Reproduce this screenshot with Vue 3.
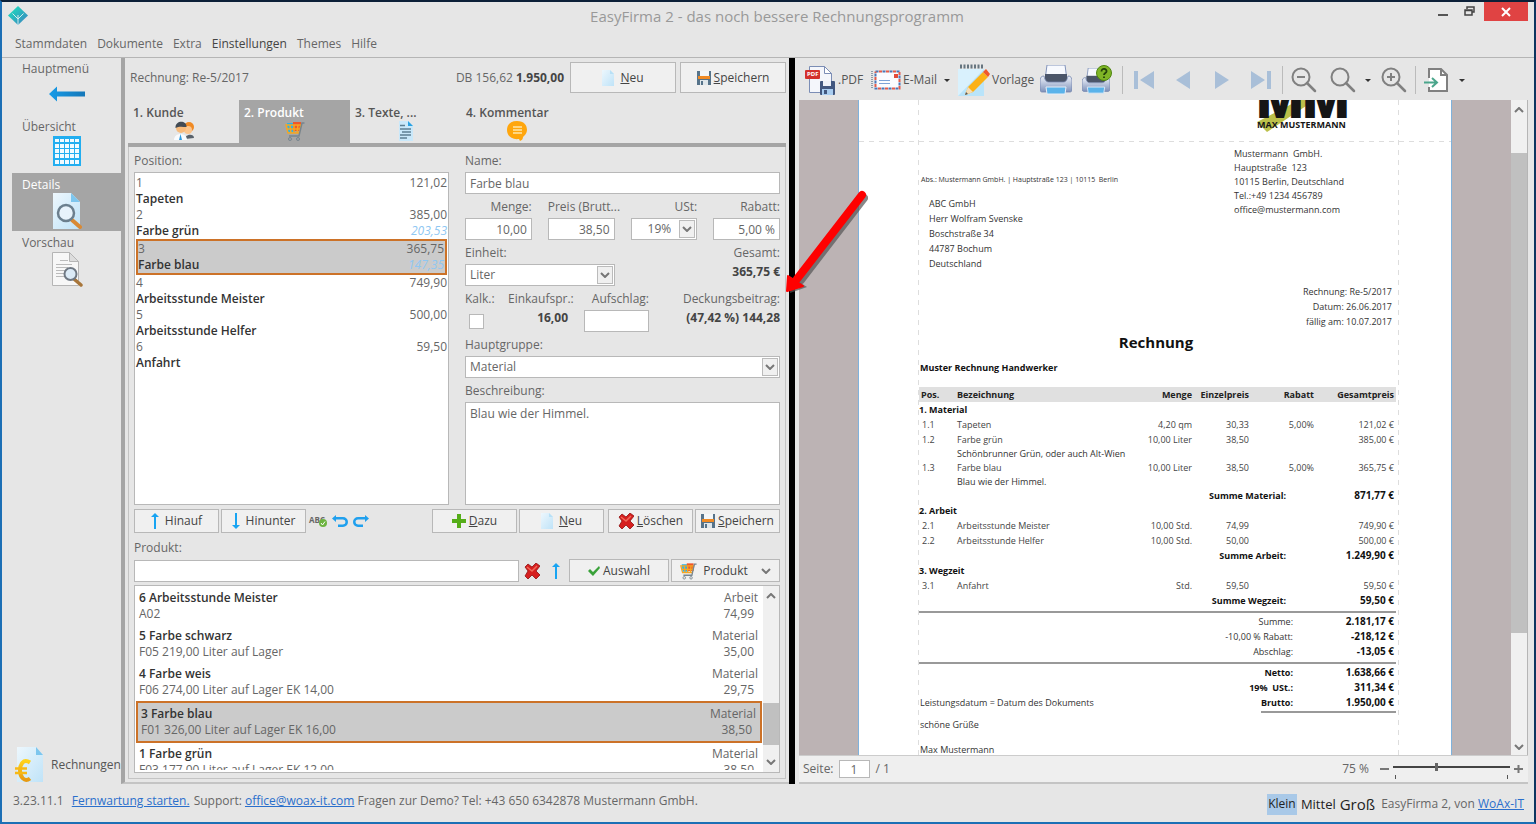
<script setup>
import { ref } from 'vue'

const menu = ['Stammdaten', 'Dokumente', 'Extra', 'Einstellungen', 'Themes', 'Hilfe']
const side = [
  { label: 'Hauptmenü', icon: 'i-back', w: 36, h: 34 },
  { label: 'Übersicht', icon: 'i-grid', w: 30, h: 32 },
  { label: 'Details', icon: 'i-detail', w: 30, h: 36, active: true },
  { label: 'Vorschau', icon: 'i-preview', w: 32, h: 36 },
]
const tabs = [
  { label: '1. Kunde', icon: 'i-people' },
  { label: '2. Produkt', icon: 'i-cart', active: true },
  { label: '3. Texte, ...', icon: 'i-text' },
  { label: '4. Kommentar', icon: 'i-comment' },
]
const positions = [
  { n: 1, name: 'Tapeten', sum: '121,02' },
  { n: 2, name: 'Farbe grün', sum: '385,00', db: '203,53' },
  { n: 3, name: 'Farbe blau', sum: '365,75', db: '147,35', active: true },
  { n: 4, name: 'Arbeitsstunde Meister', sum: '749,90' },
  { n: 5, name: 'Arbeitsstunde Helfer', sum: '500,00' },
  { n: 6, name: 'Anfahrt', sum: '59,50' },
]
const products = [
  { name: '6 Arbeitsstunde Meister', info: 'A02', group: 'Arbeit', price: '74,99' },
  { name: '5 Farbe schwarz', info: 'F05 219,00 Liter auf Lager', group: 'Material', price: '35,00' },
  { name: '4 Farbe weis', info: 'F06 274,00 Liter auf Lager EK 14,00', group: 'Material', price: '29,75' },
  { name: '3 Farbe blau', info: 'F01 326,00 Liter auf Lager EK 16,00', group: 'Material', price: '38,50', active: true },
  { name: '1 Farbe grün', info: 'F03 177,00 Liter auf Lager EK 12,00', group: 'Material', price: '38,50' },
]
const invoice = [
  { kind: 'group', text: '1. Material' },
  { kind: 'item', pos: '1.1', text: 'Tapeten', qty: '4,20 qm', price: '30,33', rebate: '5,00%', sum: '121,02 €' },
  { kind: 'item', pos: '1.2', text: 'Farbe grün', qty: '10,00 Liter', price: '38,50', rebate: '', sum: '385,00 €' },
  { kind: 'note', text: 'Schönbrunner Grün, oder auch Alt-Wien' },
  { kind: 'item', pos: '1.3', text: 'Farbe blau', qty: '10,00 Liter', price: '38,50', rebate: '5,00%', sum: '365,75 €' },
  { kind: 'note', text: 'Blau wie der Himmel.' },
  { kind: 'sum', text: 'Summe Material:', sum: '871,77 €' },
  { kind: 'group', text: '2. Arbeit' },
  { kind: 'item', pos: '2.1', text: 'Arbeitsstunde Meister', qty: '10,00 Std.', price: '74,99', rebate: '', sum: '749,90 €' },
  { kind: 'item', pos: '2.2', text: 'Arbeitsstunde Helfer', qty: '10,00 Std.', price: '50,00', rebate: '', sum: '500,00 €' },
  { kind: 'sum', text: 'Summe Arbeit:', sum: '1.249,90 €' },
  { kind: 'group', text: '3. Wegzeit' },
  { kind: 'item', pos: '3.1', text: 'Anfahrt', qty: 'Std.', price: '59,50', rebate: '', sum: '59,50 €' },
  { kind: 'sum', text: 'Summe Wegzeit:', sum: '59,50 €' },
]
const name = ref('Farbe blau')
const description = ref('Blau wie der Himmel.')
const zoom = ref(37)
</script>

<template>
  <div class="window">
    <svg class="defs" width="0" height="0" aria-hidden="true">
      <defs>
        <linearGradient id="g-blue" x1="0" y1="0" x2="1" y2="0"><stop offset="0" stop-color="#189ce8" /><stop offset="1" stop-color="#1577b8" /></linearGradient>
        <linearGradient id="g-sheet" x1="0" y1="0" x2="1" y2="1"><stop offset="0" stop-color="#edf7fd" /><stop offset="1" stop-color="#bfe3f8" /></linearGradient>
        <linearGradient id="g-print" x1="0" y1="0" x2="0" y2="1"><stop offset="0" stop-color="#eef2fa" /><stop offset="1" stop-color="#7f92ba" /></linearGradient>
        <linearGradient id="g-logo" x1="0" y1="0" x2="1" y2="1"><stop offset="0" stop-color="#19e6bd" /><stop offset="1" stop-color="#3f7fc0" /></linearGradient>
        <linearGradient id="g-gold" x1="0" y1="0" x2="0" y2="1"><stop offset="0" stop-color="#ffd21c" /><stop offset="1" stop-color="#e89a12" /></linearGradient>
      </defs>
      <symbol id="i-logo" viewBox="0 0 20 20">
        <path d="M10 0 20 9.500 10 19 0 9.500z" fill="url(#g-logo)" />
        <path d="M10 9v10M10 13 4.500 7.500M10 13l5.500-5.500" stroke="#d5ecec" stroke-width="1" fill="none" />
      </symbol>
      <symbol id="i-back" viewBox="0 0 36 34"><path d="M0 17 8 9.500v5h28v5H8v5z" fill="url(#g-blue)" /></symbol>
      <symbol id="i-grid" viewBox="0 0 30 32">
        <path d="M1 1h28v30H1z" fill="#22aef0" />
        <path d="M3 4h4v3H3zM8 4h4v3H8zM13 4h4v3h-4zM18 4h4v3h-4zM23 4h4v3h-4zM3 9h4v4H3zM8 9h4v4H8zM13 9h4v4h-4zM18 9h4v4h-4zM23 9h4v4h-4zM3 14h4v4H3zM8 14h4v4H8zM13 14h4v4h-4zM18 14h4v4h-4zM23 14h4v4h-4zM3 19h4v4H3zM8 19h4v4H8zM13 19h4v4h-4zM18 19h4v4h-4zM23 19h4v4h-4zM3 25h4v4H3zM8 25h4v4H8zM13 25h4v4h-4zM18 25h4v4h-4zM23 25h4v4h-4z" fill="#f0faff" />
      </symbol>
      <symbol id="i-detail" viewBox="0 0 30 36">
        <path d="M1 0h18l9 9v27H1z" fill="url(#g-sheet)" /><path d="M19 0v9h9z" fill="#7dc6ee" />
        <path d="m20 27 8 7" stroke="#d98a35" stroke-width="4" stroke-linecap="round" />
        <circle cx="14" cy="20" r="8" fill="#e8f3fb" stroke="#6b7f8e" stroke-width="2.500" />
      </symbol>
      <symbol id="i-preview" viewBox="0 0 32 36">
        <path d="M1.500 1.500h17l9 9v24h-26z" fill="#f7f7f7" stroke="#b5b5b5" /><path d="M18.500 1.500v9h9z" fill="#ddd" stroke="#b5b5b5" />
        <path d="M9 9.500h8M5 13.500h16M5 16.500h12M5 19.500h9M5 22.500h9M5 25.500h10" stroke="#bbb" />
        <path d="m23 28 7 6" stroke="#a8763a" stroke-width="3.500" stroke-linecap="round" />
        <circle cx="19.500" cy="23" r="6" fill="#dcebf7" stroke="#707984" stroke-width="2" />
      </symbol>
      <symbol id="i-euro" viewBox="0 0 30 36">
        <path d="M2 0h19l7 8v27H2z" fill="url(#g-sheet)" /><path d="M21 0v8h7z" fill="#7dc6ee" />
        <path d="M15 15.500C8 11 5 18 5 23.500S9 36 15 31.500" fill="none" stroke="url(#g-gold)" stroke-width="4" />
        <path d="M0 21.500h12M0 26h12" fill="none" stroke="#f7b916" stroke-width="2.500" />
      </symbol>
      <symbol id="i-people" viewBox="0 0 20 20">
        <circle cx="15" cy="6" r="5" fill="#f08a24" /><circle cx="14" cy="9" r="4" fill="#fbc58d" />
        <path d="M11 18c0-5 9-6 9-1z" fill="#59626b" /><circle cx="7" cy="7" r="5" fill="#f8bb7c" />
        <path d="M1.500 7C1-1 13-1 12.500 6 9 6 5 5 1.500 7z" fill="#424b54" />
        <path d="M0 19c0-8 13-8 13 0z" fill="#f8fbfe" /><path d="m6.500 13 1.500 6H5z" fill="#2c9be0" />
      </symbol>
      <symbol id="i-cart" viewBox="0 0 20 20">
        <path d="M2 2h8v9H3z" fill="#2bb2ea" /><path d="M8 1h8v9H8z" fill="#f0572b" />
        <path d="M1 4h15l-2 8H3zM5 4l1 8M9 4v8M13 4l-1 8M2 8h13" fill="none" stroke="#f5a623" stroke-width="1.500" />
        <path d="M19.500 2H17l-3 13H4" fill="none" stroke="#77858f" stroke-width="1.500" />
        <circle cx="5" cy="18" r="1.500" fill="none" stroke="#77858f" /><circle cx="13" cy="18" r="1.500" fill="none" stroke="#77858f" />
      </symbol>
      <symbol id="i-text" viewBox="0 0 20 20">
        <path d="M3 0h9l5 5v15H3z" fill="#c9e8fa" /><path d="M12 0v5h5z" fill="#2ba2e2" />
        <path d="M4 4.500h5M4 8h11M6 11h9M4 14h11M4 17h7" stroke="#5d7f94" stroke-width="1.300" />
      </symbol>
      <symbol id="i-comment" viewBox="0 0 20 20">
        <path d="M10 0c7 0 10 4 10 9 0 3-2 5-4 7 0 2-1 3-3 4l-1-2C5 19 0 15 0 9c0-5 3-9 10-9z" fill="#ffa60d" />
        <path d="M6 6h9M6 9h9M6 12h9" stroke="#ffe6a8" stroke-width="1.500" />
      </symbol>
      <symbol id="i-sheet" viewBox="0 0 12 16"><path d="M0 0h8l4 4v12H0z" fill="url(#g-sheet)" /><path d="M8 0v4h4z" fill="#b8e0f6" /></symbol>
      <symbol id="i-save" viewBox="0 0 14 14">
        <path d="M0 0h14v14H0z" fill="#56738a" /><path d="M3 0h9v6H3z" fill="#f3f6f8" /><path d="M1 5h12v3H1z" fill="#f08a24" />
        <path d="M3 9h8v5H3z" fill="#dfe6ea" /><path d="M4 10h2v4H4z" fill="#56738a" />
      </symbol>
      <symbol id="i-up" viewBox="0 0 8 16"><path d="m4 0 4 4H5v12H3V4H0z" fill="#18a4f2" /></symbol>
      <symbol id="i-down" viewBox="0 0 8 16"><path d="m4 16 4-4H5V0H3v12H0z" fill="#18a4f2" /></symbol>
      <symbol id="i-undo" viewBox="0 0 17 12"><path d="M4 0v2h7a5 5 0 0 1 0 10H6V9.500h5a2.500 2.500 0 0 0 0-5H4V7L0 3.500z" fill="#20a0ee" /></symbol>
      <symbol id="i-redo" viewBox="0 0 17 12"><path d="M13 0v2H6a5 5 0 0 0 0 10h5V9.500H6a2.500 2.500 0 0 1 0-5h7V7l4-3.500z" fill="#20a0ee" /></symbol>
      <symbol id="i-plus" viewBox="0 0 14 14"><path d="M5 0h4v5h5v4H9v5H5V9H0V5h5z" fill="#55ad19" /></symbol>
      <symbol id="i-x" viewBox="0 0 16 16">
        <path d="m1 4 3-3 4 3 4-4 4 3-4 5 4 4-4 4-4-4-4 4-3-3 3-5z" fill="#d61f1f" stroke="#8f1212" stroke-width=".8" /><path d="m3 4 5 4 5-5" stroke="#f06a5a" stroke-width="1.500" fill="none" />
      </symbol>
      <symbol id="i-check" viewBox="0 0 12 10"><path d="m0 5 2-2 3 3 6-6 1 2-7 8z" fill="#3aa23a" /></symbol>
      <symbol id="i-chev" viewBox="0 0 10 6"><path d="m1 1 4 4 4-4" fill="none" stroke="#777" stroke-width="2" /></symbol>
      <symbol id="i-chevup" viewBox="0 0 10 6"><path d="m1 5 4-4 4 4" fill="none" stroke="#777" stroke-width="2" /></symbol>
      <symbol id="i-pdf" viewBox="0 0 30 30">
        <path d="M4.500 1.500h15l7 7v19h-22z" fill="#f4f6fb" stroke="#7b8db5" /><path d="M19.500 1.500v7h7z" fill="#fff" stroke="#7b8db5" />
        <rect x="0" y="5" width="15" height="9" rx="1" fill="#d3302c" />
        <rect x="15" y="16" width="15" height="14" rx="1" fill="#42577f" /><path d="M18 16h8v5h-8z" fill="#eef1f8" /><path d="M17 24h11v6H17z" fill="#a9cdf0" /><path d="M19 25h3v4h-3z" fill="#42577f" />
      </symbol>
      <symbol id="i-mail" viewBox="0 0 30 20">
        <path d="M1 1v18" stroke="#8d9cab" stroke-width="2" stroke-dasharray="1 1" />
        <rect x="4.500" y="1.500" width="24" height="17" fill="#fbfcff" />
        <rect x="4.500" y="1.500" width="24" height="17" fill="none" stroke="#4a76b8" stroke-width="2" stroke-dasharray="3 4" /><rect x="4.500" y="1.500" width="24" height="17" fill="none" stroke="#e35b4b" stroke-width="2" stroke-dasharray="3 4" stroke-dashoffset="3.500" />
        <path d="M23 4h4v4h-4z" fill="#e34b3b" /><path d="M8 10.500h11M8 13.500h11" stroke="#7da3d6" />
      </symbol>
      <symbol id="i-note" viewBox="0 0 32 32">
        <path d="M0 5h26v27H0z" fill="#b9e4fa" /><path d="M0 5h26L0 32z" fill="#d9f1fd" /><path d="M2 2.500h23" stroke="#66757f" stroke-width="4" stroke-dasharray="2 1.500" />
        <path d="m7 31 3-8L25 8l5 5-15 15z" fill="#fbb116" /><path d="m25 8 3-3 4 5-2 3z" fill="#f0572b" /><path d="m7 31 3-8 5 5z" fill="#f5ddb8" /><path d="m7 31 1-3 2 2z" fill="#555" />
      </symbol>
      <symbol id="i-print" viewBox="0 0 32 30">
        <path d="M7 0h18l2 15H5z" fill="#f7f9fe" stroke="#8293ba" /><path d="M5 9h22v8H5z" fill="#4b5569" />
        <path d="M4 11c1 5 3 6 5 6h14c3 0 4-2 5-6 3 0 4 2 4 5v9c0 1-1 2-2 2H2c-1 0-2-1-2-2v-9c0-3 1-5 4-5z" fill="url(#g-print)" stroke="#7384ac" stroke-width=".8" />
        <path d="M6 22h20l-1 7H7z" fill="#5ab3ea" stroke="#e8eef7" />
      </symbol>
      <symbol id="i-first" viewBox="0 0 20 20"><path d="M0 1h4v18H0zM20 1v18L6 10z" fill="#a9bfd8" /></symbol>
      <symbol id="i-prev" viewBox="0 0 20 20"><path d="M17 1v18L3 10z" fill="#a9bfd8" /></symbol>
      <symbol id="i-next" viewBox="0 0 20 20"><path d="M3 1v18l14-9z" fill="#a9bfd8" /></symbol>
      <symbol id="i-last" viewBox="0 0 20 20"><path d="M16 1h4v18h-4zM0 1v18l14-9z" fill="#a9bfd8" /></symbol>
      <symbol id="i-lens" viewBox="0 0 26 26"><circle cx="10" cy="10" r="8.500" fill="none" stroke="#808080" stroke-width="2" /><path d="m16 16 8 8" stroke="#808080" stroke-width="2.500" stroke-linecap="round" /></symbol>
      <symbol id="i-export" viewBox="0 0 25 26">
        <path d="M5 11V2h12l6 6v16H5v-4" fill="#fff" stroke="#808080" stroke-width="2" /><path d="M17 2v6h6" fill="none" stroke="#808080" stroke-width="2" />
        <path d="M0 15.500h12M8 11l5 4.500L8 20" fill="none" stroke="#4ba68c" stroke-width="2" />
      </symbol>
    </svg>

    <header class="titlebar">
      <svg class="logo"><use href="#i-logo" /></svg>
      <h1>EasyFirma 2 - das noch bessere Rechnungsprogramm</h1>
      <div class="winctl">
        <button aria-label="Minimieren"><svg width="10" height="12"><path d="M0 10h10" stroke="#555" stroke-width="2" /></svg></button>
        <button aria-label="Wiederherstellen"><svg width="12" height="12"><path d="M3 4V2h7v5H8M1 5h7v5H1zM3 2h7M1 5.500h7" fill="none" stroke="#444" stroke-width="1.500" /></svg></button>
        <button class="close" aria-label="Schließen"><svg width="10" height="10"><path d="m1 1 8 8M9 1 1 9" stroke="#fff" stroke-width="2" /></svg></button>
      </div>
    </header>

    <nav class="menubar">
      <button v-for="m in menu" :key="m" :class="{ dark: m === 'Einstellungen' }">{{ m }}</button>
    </nav>

    <main class="main">
      <aside class="sidebar">
        <button v-for="s in side" :key="s.label" class="side" :class="{ active: s.active }">
          <span>{{ s.label }}</span>
          <svg :width="s.w" :height="s.h"><use :href="'#' + s.icon" /></svg>
        </button>
        <button class="module"><svg width="30" height="36"><use href="#i-euro" /></svg>Rechnungen</button>
      </aside>

      <section class="editor">
        <div class="head">
          <span>Rechnung: Re-5/2017</span>
          <span class="totals">DB 156,62 <b>1.950,00</b></span>
          <button class="btn big"><svg width="12" height="16"><use href="#i-sheet" /></svg><span><u>N</u>eu</span></button>
          <button class="btn big save"><svg width="14" height="14"><use href="#i-save" /></svg><span><u>S</u>peichern</span></button>
        </div>
        <div class="tabs">
          <button v-for="t in tabs" :key="t.label" class="tab" :class="{ active: t.active }">
            <span>{{ t.label }}</span>
            <svg width="20" height="20"><use :href="'#' + t.icon" /></svg>
          </button>
        </div>

        <div class="panel">
          <div class="upper">
            <div class="col">
              <div class="label">Position:</div>
              <ul class="list positions">
                <li v-for="p in positions" :key="p.n" :class="{ active: p.active }">
                  <div><span>{{ p.n }}</span><span>{{ p.sum }}</span></div>
                  <div><b>{{ p.name }}</b><i v-if="p.db">{{ p.db }}</i></div>
                </li>
              </ul>
            </div>
            <form class="col" @submit.prevent>
              <label class="label" for="f-name">Name:</label>
              <input id="f-name" v-model="name" class="field">
              <div class="four">
                <div><label class="label r" for="f-qty">Menge:</label><input id="f-qty" class="field r" value="10,00"></div>
                <div><label class="label" for="f-price">Preis (Brutt...</label><input id="f-price" class="field r" value="38,50"></div>
                <div><label class="label r" for="f-tax">USt:</label><div class="select"><select id="f-tax" class="field r"><option>19%</option></select><svg width="10" height="6"><use href="#i-chev" /></svg></div></div>
                <div><label class="label r" for="f-reb">Rabatt:</label><input id="f-reb" class="field r" value="5,00 %"></div>
              </div>
              <div class="two">
                <div><label class="label" for="f-unit">Einheit:</label><div class="select"><select id="f-unit" class="field"><option>Liter</option></select><svg width="10" height="6"><use href="#i-chev" /></svg></div></div>
                <div><div class="label r">Gesamt:</div><b class="value">365,75 €</b></div>
              </div>
              <div class="calc">
                <div><label class="label" for="f-calc">Kalk.:</label><input id="f-calc" type="checkbox" class="check"></div>
                <div><div class="label r">Einkaufspr.:</div><b class="value">16,00</b></div>
                <div><label class="label r" for="f-up">Aufschlag:</label><input id="f-up" class="field r"></div>
                <div><div class="label r">Deckungsbeitrag:</div><b class="value">(47,42 %) 144,28</b></div>
              </div>
              <label class="label" for="f-group">Hauptgruppe:</label>
              <div class="select"><select id="f-group" class="field"><option>Material</option></select><svg width="10" height="6"><use href="#i-chev" /></svg></div>
              <label class="label" for="f-desc">Beschreibung:</label>
              <textarea id="f-desc" v-model="description" class="field area"></textarea>
            </form>
          </div>

          <div class="actions">
            <button class="btn"><svg width="8" height="16"><use href="#i-up" /></svg>Hinauf</button>
            <button class="btn"><svg width="8" height="16"><use href="#i-down" /></svg>Hinunter</button>
            <button class="spell" aria-label="Rechtschreibung">ABC<svg width="8" height="8"><circle cx="4" cy="4" r="4" fill="#6db33f" /><path d="m2 4 1.500 2L6 2.500" stroke="#fff" fill="none" /></svg></button>
            <button class="bare" aria-label="Rückgängig"><svg width="17" height="12"><use href="#i-undo" /></svg></button>
            <button class="bare" aria-label="Wiederholen"><svg width="17" height="12"><use href="#i-redo" /></svg></button>
            <span class="push"></span>
            <button class="btn tight"><svg width="14" height="14"><use href="#i-plus" /></svg><span><u>D</u>azu</span></button>
            <button class="btn"><svg width="12" height="16"><use href="#i-sheet" /></svg><span><u>N</u>eu</span></button>
            <span></span>
            <button class="btn tight"><svg width="16" height="16"><use href="#i-x" /></svg><span><u>L</u>öschen</span></button>
            <button class="btn tight"><svg width="14" height="14"><use href="#i-save" /></svg><span><u>S</u>peichern</span></button>
          </div>

          <label class="label" for="f-search">Produkt:</label>
          <div class="search">
            <input id="f-search" class="field">
            <button class="bare" aria-label="Suche löschen"><svg width="16" height="16"><use href="#i-x" /></svg></button>
            <button class="bare" aria-label="Übernehmen"><svg width="8" height="16"><use href="#i-up" /></svg></button>
            <button class="btn tight pick"><svg width="12" height="10"><use href="#i-check" /></svg>Auswahl</button>
            <button class="btn prod"><svg width="17" height="18"><use href="#i-cart" /></svg>Produkt<svg width="10" height="6"><use href="#i-chev" /></svg></button>
          </div>

          <div class="products">
            <ul>
              <li v-for="p in products" :key="p.name" :class="{ active: p.active }">
                <div><b>{{ p.name }}</b><span>{{ p.group }}</span></div>
                <div><span>{{ p.info }}</span><span class="price">{{ p.price }}</span></div>
              </li>
            </ul>
            <div class="scroll">
              <svg width="10" height="6"><use href="#i-chevup" /></svg>
              <span class="thumb low"></span>
              <svg width="10" height="6"><use href="#i-chev" /></svg>
            </div>
          </div>
        </div>
      </section>

      <div class="splitter"></div>

      <section class="viewer">
        <div class="toolbar">
          <button class="t-pdf"><span class="pdfic"><svg width="30" height="30"><use href="#i-pdf" /></svg><em>PDF</em></span>.PDF</button>
          <button class="t-mail"><svg width="30" height="20"><use href="#i-mail" /></svg>E-Mail<i class="caret"></i></button>
          <button class="t-note"><svg width="32" height="32"><use href="#i-note" /></svg>Vorlage</button>
          <button class="t-icon" aria-label="Drucken"><svg width="32" height="30"><use href="#i-print" /></svg></button>
          <button class="t-icon last" aria-label="Druckoptionen">
            <svg width="30" height="30" viewBox="0 0 30 30"><use href="#i-print" x="0" y="3" width="28" height="26" /><circle cx="22" cy="8" r="7.500" fill="#7fb526" stroke="#4e8410" /><path d="M19.500 6.500c0-4 5.500-3 5 0-.3 1.500-2.500 1.500-2.500 3.500M22 11.500v1.500" stroke="#24420a" stroke-width="1.800" fill="none" /></svg>
          </button>
          <span class="sep"></span>
          <button v-for="n in ['first', 'prev', 'next', 'last']" :key="n" class="t-nav" :aria-label="n"><svg width="20" height="20"><use :href="'#i-' + n" /></svg></button>
          <span class="sep"></span>
          <button class="t-nav" aria-label="Verkleinern"><svg width="26" height="26"><use href="#i-lens" /><path d="M6 10h8" stroke="#808080" stroke-width="2" /></svg></button>
          <button class="t-nav" aria-label="Zoom"><svg width="26" height="26"><use href="#i-lens" /></svg></button>
          <button class="t-drop" aria-label="Zoomstufen"><i class="caret"></i></button>
          <button class="t-nav" aria-label="Vergrößern"><svg width="26" height="26"><use href="#i-lens" /><path d="M6 10h8M10 6v8" stroke="#808080" stroke-width="2" /></svg></button>
          <span class="sep"></span>
          <button class="t-nav" aria-label="Export"><svg width="25" height="26"><use href="#i-export" /></svg></button>
          <button class="t-drop" aria-label="Exportformate"><i class="caret"></i></button>
        </div>

        <div class="canvas">
          <div class="stage">
            <article class="page">
              <div class="guide"></div>
              <div class="brand">
                <svg width="70" height="40" aria-hidden="true"><path d="m4 26 50-26h14L14 36z" fill="#bcc04a" /></svg>
                <div class="mono"><strong>MM</strong></div>
                <small>MAX MUSTERMANN</small>
              </div>
              <div class="sheet">
                <address class="company">Mustermann&nbsp; GmbH.<br>Hauptstraße&nbsp; 123<br>10115 Berlin, Deutschland<br>Tel.:+49 1234 456789<br>office@mustermann.com</address>
                <p class="sender">Abs.: Mustermann GmbH. | Hauptstraße 123 | 10115&nbsp; Berlin</p>
                <address class="customer">ABC GmbH<br>Herr Wolfram Svenske<br>Boschstraße 34<br>44787 Bochum<br>Deutschland</address>
                <p class="meta">Rechnung: Re-5/2017<br>Datum: 26.06.2017<br>fällig am: 10.07.2017</p>
                <h2>Rechnung</h2>
                <h3>Muster Rechnung Handwerker</h3>
                <table class="items">
                  <colgroup><col class="c1"><col><col class="c3"><col class="c4"><col class="c5"><col class="c6"></colgroup>
                  <thead><tr><th>Pos.</th><th>Bezeichnung</th><th>Menge</th><th>Einzelpreis</th><th>Rabatt</th><th>Gesamtpreis</th></tr></thead>
                  <tbody>
                    <tr v-for="(r, i) in invoice" :key="i" :class="r.kind">
                      <td v-if="r.kind === 'group'" colspan="6">{{ r.text }}</td>
                      <template v-else-if="r.kind === 'note'"><td></td><td colspan="5">{{ r.text }}</td></template>
                      <template v-else-if="r.kind === 'sum'"><td colspan="5">{{ r.text }}</td><td>{{ r.sum }}</td></template>
                      <template v-else><td>{{ r.pos }}</td><td>{{ r.text }}</td><td>{{ r.qty }}</td><td>{{ r.price }}</td><td>{{ r.rebate }}</td><td>{{ r.sum }}</td></template>
                    </tr>
                  </tbody>
                </table>
                <table class="sums">
                  <tbody>
                    <tr><td></td><td>Summe:</td><td><b>2.181,17 €</b></td></tr>
                    <tr><td></td><td>-10,00 % Rabatt:</td><td><b>-218,12 €</b></td></tr>
                    <tr><td></td><td>Abschlag:</td><td><b>-13,05 €</b></td></tr>
                  </tbody>
                </table>
                <table class="sums">
                  <tbody>
                    <tr><td></td><td><b>Netto:</b></td><td><b>1.638,66 €</b></td></tr>
                    <tr><td></td><td><b>19%&nbsp; USt.:</b></td><td><b>311,34 €</b></td></tr>
                    <tr><td>Leistungsdatum = Datum des Dokuments</td><td><b>Brutto:</b></td><td><b>1.950,00 €</b></td></tr>
                  </tbody>
                </table>
                <div class="endline"></div>
                <p class="bye">schöne Grüße</p>
                <p class="bye">Max Mustermann</p>
              </div>
            </article>
          </div>
          <div class="scroll">
            <svg width="10" height="6"><use href="#i-chevup" /></svg>
            <span class="thumb tall"></span>
            <svg width="10" height="6"><use href="#i-chev" /></svg>
          </div>
        </div>

        <div class="pager">
          <label for="f-page">Seite:</label><input id="f-page" class="field" value="1"><span>/ 1</span>
          <label class="zoomlabel" for="f-zoom">75 %</label>
          <svg width="9" height="10"><path d="M0 5h9" stroke="#777" stroke-width="2" /></svg>
          <div class="range"><input id="f-zoom" v-model="zoom" type="range" min="0" max="100"><span></span></div>
          <svg width="9" height="10"><path d="M0 5h9M4.500 1v8" stroke="#777" stroke-width="2" /></svg>
        </div>
      </section>

      <svg class="pointer" width="90" height="116" aria-hidden="true">
        <path d="M80 12 17 94" stroke="#555" stroke-width="8" stroke-linecap="round" opacity=".7" />
        <path d="m6 107 1-16 16 10z" fill="#555" opacity=".7" />
        <path d="M78 9 13 93" stroke="#fe0000" stroke-width="8" stroke-linecap="round" />
        <path d="m3 105 1-15 15 10z" fill="#fe0000" stroke="#fe0000" stroke-width="2" stroke-linejoin="round" />
      </svg>
    </main>

    <footer class="status">
      <p>3.23.11.1 <a class="remote" href="#">Fernwartung starten.</a> Support: <a href="#">office@woax-it.com</a> Fragen zur Demo? Tel: +43 650 6342878 Mustermann GmbH.</p>
      <div class="sizes">
        <button class="s on">Klein</button><button class="m">Mittel</button><button class="l">Groß</button>
        <span>EasyFirma 2, von <a href="#">WoAx-IT</a></span>
      </div>
    </footer>
  </div>
</template>

<style>
body { margin: 0; background: #e6e6e6; }
</style>

<style scoped>
* { box-sizing: border-box; }
.window { position: relative; display: flex; flex-direction: column; height: 100vh; min-height: 640px; border: 2px solid #1c6fb5; border-top-color: #0c2038; border-right-color: #0d3560; background: #e6e6e6; color: #666; font: 12px/16px "Open Sans", "Noto Sans", sans-serif; overflow: hidden; }
.defs { position: absolute; }
button { border: 0; padding: 0; margin: 0; background: none; color: inherit; font: inherit; white-space: nowrap; }
input, select, textarea { font: inherit; color: inherit; margin: 0; }
svg { flex: none; display: block; }
p, h1, h2, h3, ul { margin: 0; padding: 0; }
li { list-style: none; }
address { font-style: normal; }
a { color: #2a6fcc; text-decoration: underline; }

.titlebar { display: grid; grid-template-columns: 110px 1fr 110px; height: 31px; flex: none; }
.logo { width: 20px; height: 20px; margin: 4px 0 0 6px; }
h1 { font-size: 15px; font-weight: 400; line-height: 28px; text-align: center; color: #999; padding-left: 18px; }
.winctl { display: flex; gap: 16px; align-items: flex-start; justify-content: flex-end; padding-right: 6px; }
.winctl button { padding-top: 3px; }
.winctl .close { display: grid; place-items: center; width: 44px; height: 19px; padding: 0; margin-left: -8px; background: #e04343; }
.menubar { display: flex; gap: 10px; height: 24px; flex: none; padding: 0 0 2px 13px; align-items: center; }
.menubar .dark { color: #444; }

.main { position: relative; flex: 1; min-height: 0; display: grid; grid-template-columns: 119px minmax(0, 668fr) 6px minmax(0, 733fr); grid-template-rows: minmax(0, 1fr); padding-right: 6px; border-top: 1px solid #b5b5b5; }
.sidebar { display: flex; flex-direction: column; padding-left: 10px; margin-top: -1px; }
.side { display: flex; flex-direction: column; height: 58px; padding-top: 4px; text-align: left; }
.side span { padding-left: 10px; height: 16px; color: #666; }
.side svg { align-self: center; }
.side.active { background: #a5a5a5; }
.side.active span { color: #fff; }
.module { display: flex; align-items: center; gap: 6px; margin: auto 0 1px 3px; color: #555; }

.editor { display: flex; flex-direction: column; min-width: 0; border-left: 4px solid #a5a5a5; border-bottom: 2px solid #c4c4c4; padding: 4px 3px 3px 3px; }
.head { display: flex; align-items: center; gap: 4px; height: 31px; flex: none; padding-left: 2px; }
.totals { margin-left: auto; margin-right: 2px; }
.totals b, .value, .list b, .products b { color: #444; }
.list b, .products b { font-weight: 600; color: #333; }
.btn { display: flex; align-items: center; justify-content: center; gap: 6px; width: 85px; height: 24px; flex: none; background: #f0f0f0; border: 1px solid #b8b8b8; color: #444; }
.btn.big { width: 106px; height: 31px; }
.btn.tight, .btn.save { gap: 3px; }
.tabs { display: flex; height: 47px; flex: none; margin-top: 7px; border-bottom: 4px solid #a5a5a5; }
.tab { display: flex; flex-direction: column; width: 111px; padding: 5px 5px 0; text-align: left; font-weight: 600; color: #555; }
.tab svg { align-self: center; }
.tab span { height: 16px; }
.tab.active { background: #a5a5a5; color: #fff; }
.panel { flex: 1; min-height: 0; display: flex; flex-direction: column; border: 1px solid #c4c4c4; border-top: 0; padding: 1px 5px 5px; }
.upper { flex: 1; min-height: 0; display: grid; grid-template-columns: 1fr 1fr; gap: 16px; }
.col { display: flex; flex-direction: column; min-width: 0; }
.label { display: block; height: 24px; flex: none; padding-top: 2px; line-height: 22px; white-space: nowrap; }
.r { text-align: right; }
.field { display: block; width: 100%; height: 22px; padding: 0 4px; border: 1px solid #b8b8b8; border-radius: 0; background: #fff; color: #666; outline: 0; }
.area { flex: 1; resize: none; padding: 3px 4px; }
.list { flex: 1; background: #fff; border: 1px solid #b8b8b8; padding: 2px 1px; }
.positions li.active { border: 2px solid #cc7228; padding: 0 1px 0 0; background: #cbcbcb; }
.list li > div, .products li > div { display: flex; justify-content: space-between; height: 16px; }
.list i { color: #8fc7f2; }
.four { display: grid; grid-template-columns: repeat(4, minmax(0, 1fr)); gap: 16px; }
.two { display: grid; grid-template-columns: minmax(0, 150fr) minmax(0, 150fr); gap: 16px; }
.calc { display: grid; grid-template-columns: 27px 60px 65px 1fr; gap: 16px; height: 46px; }
.value { display: block; text-align: right; line-height: 16px; white-space: nowrap; }
.check { appearance: none; display: block; width: 15px; height: 15px; margin: 4px 0 0 4px; border: 1px solid #b8b8b8; background: #fff; }
.select { position: relative; }
.select select { appearance: none; }
.select select.r { text-align-last: right; padding-right: 25px; }
.select svg { position: absolute; right: 2px; top: 2px; width: 16px; height: 18px; padding: 5px 2px; border: 1px solid #bbb; background: #f0f0f0; pointer-events: none; }
.actions { display: flex; gap: 2px; align-items: center; padding-top: 4px; margin-bottom: 2px; flex: none; }
.actions .push { flex: 1; }
.spell { display: flex; width: 20px; margin-left: 1px; font-size: 8px; line-height: 10px; font-weight: 700; }
.spell svg { margin: 4px 0 0 -6px; }
.bare { display: grid; place-items: center; width: 18px; height: 22px; flex: none; }
.search { display: flex; gap: 2px; align-items: center; flex: none; }
.search .field { flex: 1; }
.search .bare { width: 22px; }
.search .btn { height: 23px; }
.search .pick { width: 100px; }
.search .prod { width: 109px; }
.prod svg:last-child { margin-left: 7px; }
.products { display: flex; height: 188px; flex: none; margin-top: 3px; border: 1px solid #b8b8b8; background: #fff; overflow: hidden; }
.products ul { flex: 1; height: 184px; padding: 1px; overflow: hidden; }
.products li { padding: 3px 4px 3px 3px; }
.products li.active { border: 2px solid #cc7228; background: #cbcbcb; }
.products .price { padding-right: 4px; }
.scroll { display: flex; flex-direction: column; align-items: center; justify-content: space-between; width: 16px; flex: none; padding: 7px 0; background: #f0f0f0; }
.thumb { width: 16px; background: #c0c0c0; }
.thumb.low { height: 42px; margin: auto 0 14px; }
.splitter { background: #000; }

.viewer { display: flex; flex-direction: column; min-width: 0; padding-left: 4px; }
.toolbar { display: flex; align-items: center; height: 42px; flex: none; padding: 2px 0 0 6px; color: #555; }
.toolbar button { display: flex; align-items: center; height: 34px; flex: none; }
.t-pdf { width: 66px; gap: 3px; }
.t-mail { width: 87px; gap: 2px; }
.t-note { width: 82px; gap: 2px; }
.toolbar .t-icon { width: 42px; }
.toolbar .t-icon.last { width: 38px; }
.toolbar .t-nav { width: 39px; justify-content: center; }
.toolbar .t-drop { width: 12px; justify-content: center; }
.pdfic { position: relative; }
.pdfic em { position: absolute; left: 2px; top: 5px; color: #fff; font: 700 6px/9px "Open Sans", sans-serif; }
.sep { width: 1px; height: 28px; margin: 0 1px 0 2px; background: #bbb; }
.caret { border: 3px solid transparent; border-top-color: #333; border-bottom: 0; }
.t-mail .caret { margin-left: 5px; }
.canvas { flex: 1; min-height: 0; display: flex; border-right: 1px solid #b5b5b5; }
.stage { flex: 1; min-width: 0; background: #bcb3b4; overflow: hidden; }
.page { position: relative; max-width: 594px; height: 100%; margin: 0 auto; border: 1px solid #7fb2dd; border-width: 0 1px; background: #fff; color: #333; font-size: 9px; line-height: 15px; overflow: hidden; }
.guide { position: absolute; inset: 0; background: repeating-linear-gradient(90deg, #ddd 0 5px, transparent 5px 10px) 0 41px / 100% 1px no-repeat, repeating-linear-gradient(180deg, #ddd 0 5px, transparent 5px 10px) 59px 0 / 1px 100% no-repeat, repeating-linear-gradient(180deg, #ddd 0 5px, transparent 5px 10px) 539px 0 / 1px 100% no-repeat; }
.brand { position: absolute; left: 398px; top: 0; width: 92px; color: #151515; }
.brand svg { position: absolute; left: -4px; top: -4px; }
.mono { position: relative; display: flex; align-items: flex-end; height: 19px; overflow: hidden; }
.mono strong { font: 900 48px/36px Inter, sans-serif; }
.brand small { position: relative; display: block; font: 700 9px/12px "Open Sans", sans-serif; white-space: nowrap; }
.sheet { position: relative; padding: 47px 55px 0 60px; }
.company { margin-left: 315px; line-height: 14px; height: 27px; white-space: nowrap; }
.sender { font-size: 7px; line-height: 12px; padding-left: 2px; height: 22px; }
.customer { padding-left: 10px; height: 88px; }
.meta { text-align: right; padding-right: 4px; height: 45px; }
h2 { margin-top: 3px; text-align: center; font-size: 15px; line-height: 20px; font-weight: 700; color: #111; padding-right: 3px; }
h3 { margin-top: 8px; padding-left: 1px; font-size: 9px; line-height: 15px; font-weight: 700; color: #111; }
table { width: 100%; border-collapse: collapse; table-layout: fixed; }
th, td { padding: 0 2px; height: 15px; line-height: 15px; text-align: right; white-space: nowrap; }
.items { margin-top: 12px; }
.items th { background: #e0e0e0; color: #222; }
.c1 { width: 36px; } .c3 { width: 60px; } .c4 { width: 57px; } .c5 { width: 65px; } .c6 { width: 80px; }
.items th:nth-child(-n+2), .item td:nth-child(-n+2), .note td, .group td { text-align: left; }
.item td { color: #444; }
.item td:first-child { padding-left: 3px; }
.group td { padding-left: 0; font-weight: 700; color: #111; }
.note td { height: 13px; line-height: 13px; }
.sum td { font-weight: 700; color: #111; }
.sum td:first-child { padding-right: 30px; }
.sums { border-top: 2px solid #999; margin-top: 3px; }
.sums tr:first-child td { height: 16px; padding-top: 1px; }
.sums td:nth-child(2) { width: 120px; }
.sums td:last-child, .sum td:last-child { font-size: 10px; }
.sums td:last-child { width: 101px; }
.sums td:first-child { text-align: left; padding-left: 1px; }
.sums b { color: #111; }
.endline { width: 135px; margin: 1px 0 0 auto; border-top: 2px solid #999; }
.bye { padding-left: 1px; line-height: 27px; margin-top: -2px; }
.canvas .scroll { justify-content: flex-start; padding: 7px 0 5px; }
.thumb.tall { flex: 1; margin: 40px 0 111px; }
.pager { display: flex; align-items: center; height: 29px; flex: none; padding: 0 5px 0 4px; border-top: 1px solid #ccc; border-bottom: 2px solid #c4c4c4; background: #efefef; }
.pager .field { width: 31px; height: 18px; margin: 0 6px 0 5px; text-align: center; }
.zoomlabel { margin: 0 11px 0 auto; }
.range { position: relative; width: 117px; height: 22px; margin: 0 4px; }
.range input { appearance: none; display: block; width: 100%; height: 18px; margin: 0; background: linear-gradient(#444, #444) 0 8px / 100% 2px no-repeat; }
.range input::-webkit-slider-thumb { appearance: none; width: 3px; height: 8px; background: #666; }
.range span { position: absolute; left: 2px; right: 2px; bottom: 1px; height: 4px; border: 1px solid #555; border-width: 0 1px; }
.pointer { position: absolute; left: 782px; top: 128px; pointer-events: none; }

.status { display: flex; justify-content: space-between; align-items: center; height: 38px; flex: none; padding: 0 10px 4px 11px; }
.remote { margin: 0 1px 0 5px; }
.sizes { display: flex; align-items: center; gap: 4px; padding-top: 6px; }
.sizes button { color: #222; }
.sizes .s { width: 30px; height: 21px; }
.sizes .on { background: #a9c9e8; }
.sizes .m { font-size: 13px; }
.sizes .l { font-size: 15px; margin-right: 2px; }
</style>
